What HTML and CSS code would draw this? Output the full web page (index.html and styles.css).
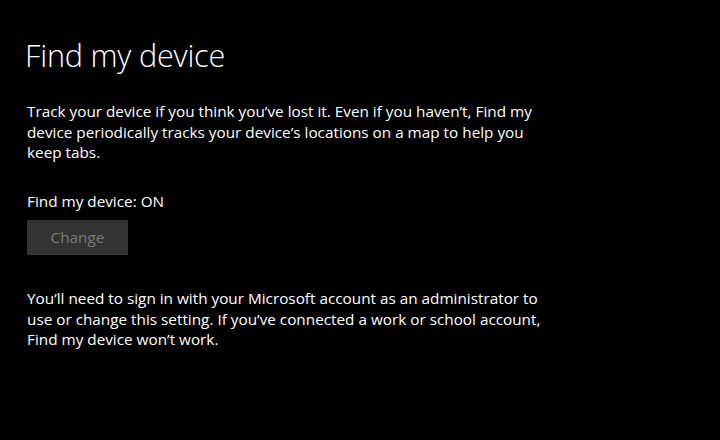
FILE: index.html
```html
<!DOCTYPE html>
<html lang="en">
<head>
<meta charset="utf-8">
<title>Find my device</title>
<link rel="stylesheet" href="styles.css">
</head>
<body>
<main class="page">
  <h1 class="title">Find my device</h1>
  <p class="desc">Track your device if you think you’ve lost it. Even if you haven’t, Find my device periodically tracks your device’s locations on a map to help you keep tabs.</p>
  <p class="status">Find my device: ON</p>
  <button class="btn" disabled>Change</button>
  <p class="note">You’ll need to sign in with your Microsoft account as an administrator to use or change this setting. If you’ve connected a work or school account, Find my device won’t work.</p>
</main>
</body>
</html>
```
FILE: styles.css
```css
html, body {
  margin: 0;
  background: #000;
  height: 100%;
}
.page {
  padding: 33px 0 0 27px;
  color: #fff;
  font-family: "Open Sans", "Noto Sans", sans-serif;
  font-size: 15.3px;
  line-height: 20.5px;
}
.title {
  margin: 0 0 0 -2px;
  font-size: 30.6px;
  font-weight: 300;
  line-height: 44px;
  letter-spacing: -0.2px;
}
.desc {
  margin: 24px 0 0;
  width: 505px;
}
.status {
  margin: 28px 0 0;
}
.btn {
  display: block;
  margin-top: 9px;
  width: 101px;
  height: 35px;
  border: 0;
  background: #333;
  color: #7a7a7a;
  font: inherit;
  padding: 0;
}
.note {
  margin: 33px 0 0;
  width: 522px;
}
```
